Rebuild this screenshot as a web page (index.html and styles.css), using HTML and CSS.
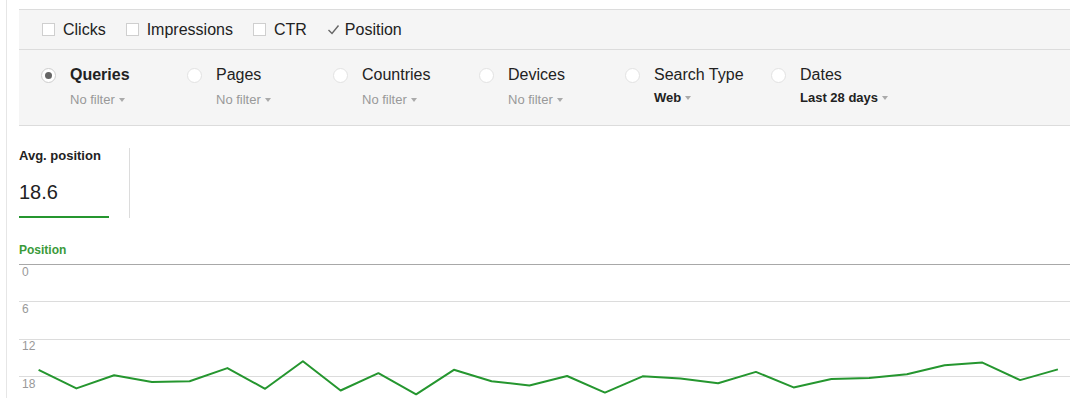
FILE: index.html
```html
<!DOCTYPE html>
<html lang="en">
<head>
  <meta charset="UTF-8">
  <title>Search Analytics</title>
  <link rel="stylesheet" href="styles.css">
</head>
<body>
  <div class="page">
    <div class="filters">
      <!-- metric checkboxes -->
      <div class="metrics">
        <label class="metric"><span class="box"></span>Clicks</label>
        <label class="metric"><span class="box"></span>Impressions</label>
        <label class="metric"><span class="box"></span>CTR</label>
        <label class="metric checked">
          <svg class="tick" width="13" height="13" viewBox="0 0 13 13"><path d="M1.5 7 L5 10.5 L11.5 2.5" fill="none" stroke="#666" stroke-width="1.4"/></svg>Position
        </label>
      </div>

      <!-- group by -->
      <div class="groups">
        <div class="group">
          <span class="radio on"></span>
          <div>
            <div class="name bold">Queries</div>
            <div class="sub">No filter <span class="caret"></span></div>
          </div>
        </div>
        <div class="group">
          <span class="radio"></span>
          <div>
            <div class="name">Pages</div>
            <div class="sub">No filter <span class="caret"></span></div>
          </div>
        </div>
        <div class="group">
          <span class="radio"></span>
          <div>
            <div class="name">Countries</div>
            <div class="sub">No filter <span class="caret"></span></div>
          </div>
        </div>
        <div class="group">
          <span class="radio"></span>
          <div>
            <div class="name">Devices</div>
            <div class="sub">No filter <span class="caret"></span></div>
          </div>
        </div>
        <div class="group">
          <span class="radio"></span>
          <div>
            <div class="name">Search Type</div>
            <div class="sub set">Web <span class="caret"></span></div>
          </div>
        </div>
        <div class="group">
          <span class="radio"></span>
          <div>
            <div class="name">Dates</div>
            <div class="sub set">Last 28 days <span class="caret"></span></div>
          </div>
        </div>
      </div>
    </div>

    <div class="totals">
      <div class="total">
        <div class="total-label">Avg. position</div>
        <div class="total-value">18.6</div>
      </div>
    </div>

    <div class="chart-title">Position</div>
    <svg class="chart" width="1051" height="134" viewBox="0 0 1051 134">
      <line x1="0" y1="0.5" x2="1051" y2="0.5" stroke="#a8a8a8"/>
      <line x1="0" y1="37.5" x2="1051" y2="37.5" stroke="#dcdcdc"/>
      <line x1="0" y1="75.5" x2="1051" y2="75.5" stroke="#dcdcdc"/>
      <line x1="0" y1="112.5" x2="1051" y2="112.5" stroke="#dcdcdc"/>
      <text x="3" y="12" class="axis">0</text>
      <text x="3" y="49" class="axis">6</text>
      <text x="3" y="86" class="axis">12</text>
      <text x="3" y="124" class="axis">18</text>
      <polyline fill="none" stroke="#25962f" stroke-width="2" stroke-linejoin="round"
        points="19.6,105.8 57.4,124.4 95.1,111.3 132.9,117.9 170.6,117.2 208.4,104.1 246.1,124.8 283.9,97.2 321.6,126.5 359.4,109.2 397.1,130.3 434.9,105.8 472.6,117.2 510.4,121.5 548.1,112 585.9,128.6 623.6,112.3 661.4,114.4 699.1,119.2 736.9,107.9 774.6,123.4 812.4,115.1 850.1,114.1 887.9,110.3 925.6,101.3 963.4,98.6 1001.1,116.1 1038.9,105.4"/>
    </svg>
  </div>
</body>
</html>
```

FILE: styles.css
```css
body {
  margin: 0;
  font-family: "Liberation Sans", Arial, sans-serif;
  color: #222;
  background: #fff;
  height: 398px;
  overflow: hidden;
}
.page {
  margin-left: 6px;
  margin-right: 2px;
  padding-left: 12px;
  padding-top: 9px;
  border-left: 1px solid #e6e6e6;
  min-height: 398px;
  box-sizing: border-box;
}
.filters {
  background: #f5f5f5;
  border-top: 1px solid #dcdcdc;
  border-bottom: 1px solid #dcdcdc;
}
.metrics {
  display: flex;
  align-items: center;
  height: 39px;
  padding-left: 23px;
  gap: 20px;
  border-bottom: 1px solid #dcdcdc;
  font-size: 16px;
}
.metric {
  display: flex;
  align-items: center;
  gap: 8px;
}
.metric .box {
  width: 11px;
  height: 11px;
  background: #fff;
  border: 1px solid #cfcfcf;
}
.metric.checked {
  gap: 5px;
}
.tick {
  display: block;
}
.groups {
  display: flex;
  height: 75px;
  padding-left: 22px;
  box-sizing: border-box;
  padding-top: 15px;
}
.group {
  display: flex;
  width: 146px;
  gap: 14px;
}
.radio {
  width: 13px;
  height: 13px;
  border-radius: 50%;
  background: #fff;
  border: 1px solid #e2e2e2;
  margin-top: 3px;
  flex: none;
  position: relative;
}
.radio.on {
  border-color: #cdcdcd;
}
.radio.on::after {
  content: "";
  position: absolute;
  left: 3px;
  top: 3px;
  width: 7px;
  height: 7px;
  border-radius: 50%;
  background: #666;
}
.name {
  font-size: 16px;
  line-height: 20px;
}
.bold {
  font-weight: bold;
}
.sub {
  font-size: 13px;
  color: #999;
  margin-top: 7px;
  display: flex;
  align-items: center;
  gap: 4px;
}
.sub.set {
  color: #222;
  font-weight: bold;
  margin-top: 5px;
}
.caret {
  width: 0;
  height: 0;
  border-left: 3.5px solid transparent;
  border-right: 3.5px solid transparent;
  border-top: 4px solid #aaa;
  margin-top: 1px;
}
.totals {
  display: flex;
  padding-top: 22px;
}
.total {
  width: 90px;
  padding-right: 20px;
  border-right: 1px solid #dcdcdc;
  height: 70px;
}
.total-label {
  font-size: 13px;
  font-weight: bold;
  line-height: 16px;
}
.total-value {
  font-size: 20px;
  line-height: 24px;
  margin-top: 16px;
  padding-bottom: 12px;
  border-bottom: 2px solid #25962f;
}
.chart-title {
  font-size: 12px;
  font-weight: bold;
  color: #3a9a3a;
  margin-top: 25px;
  line-height: 14px;
}
.chart {
  display: block;
  margin-top: 7px;
}
.axis {
  font-size: 12px;
  fill: #999;
  font-family: "Liberation Sans", Arial, sans-serif;
}
```
